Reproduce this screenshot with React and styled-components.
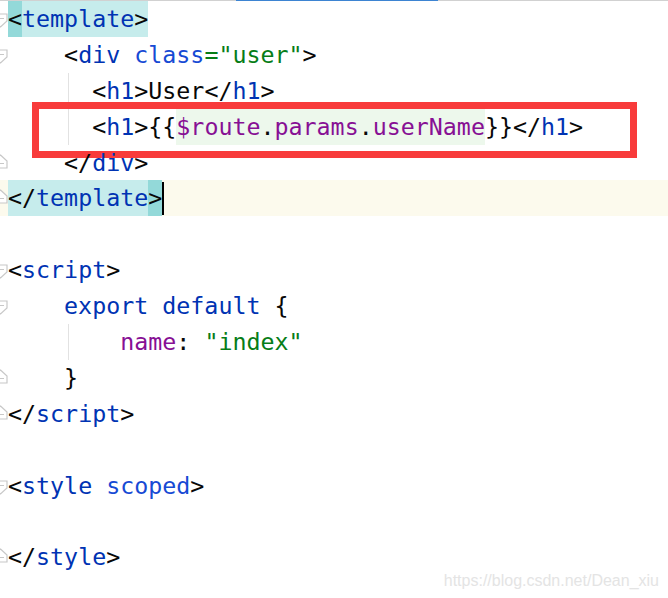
import React from 'react';
import styled, { createGlobalStyle } from 'styled-components';

const GlobalStyle = createGlobalStyle`
  html, body {
    margin: 0;
    padding: 0;
    background: #fff;
  }
`;

const Screen = styled.div`
  position: relative;
  width: 668px;
  height: 598px;
  overflow: hidden;
  background: #fff;
`;

const TabStrip = styled.div`
  display: flex;
  height: 1px;
  background: #d1d1d1;
`;

const ActiveTab = styled.div`
  margin-left: 236px;
  width: 202px;
  background: #3d84d2;
`;

const Editor = styled.div`
  display: flex;
  flex-direction: column;
  font-family: 'DejaVu Sans Mono', 'Liberation Mono', monospace;
  font-size: 23.3px;
`;

const Line = styled.div`
  position: relative;
  display: flex;
  height: 35.9px;
  line-height: 35.9px;
  white-space: pre;
  background-color: ${({ current }) => (current ? '#fcfaed' : 'transparent')};
  background-image: ${({ guide }) =>
    guide ? 'linear-gradient(#e2e2e2, #e2e2e2)' : 'none'};
  background-repeat: no-repeat;
  background-position: 68px 0;
  background-size: 1px 100%;
`;

const Gutter = styled.div`
  width: 8px;
  flex: none;
  overflow: hidden;
  display: flex;
  align-items: center;
`;

const FoldSvg = styled.svg`
  flex: none;
  margin-left: -7px;
  margin-top: ${({ dir }) => (dir === 'up' ? '-3px' : '3px')};
`;

const Code = styled.div`
  display: flex;
  padding-left: ${({ indent }) => indent || 0}ch;
`;

const colors = {
  p: '#080808',
  tag: '#0033b3',
  attr: '#174ad4',
  str: '#067d17',
  field: '#871094',
};

const highlights = {
  dark: '#93d9d9',
  light: '#c6ecec',
  inj: '#edf8ec',
};

const Token = styled.span`
  color: ${({ kind }) => colors[kind] || colors.p};
  background: ${({ hl }) => (hl ? highlights[hl] : 'transparent')};
`;

const Caret = styled.span`
  align-self: center;
  width: 2px;
  height: 33px;
  background: #000;
`;

const Callout = styled.div`
  position: absolute;
  left: 32px;
  top: -7px;
  width: 605px;
  height: 56px;
  box-sizing: border-box;
  border: 7px solid #f83b3b;
  pointer-events: none;
`;

const Watermark = styled.div`
  position: absolute;
  right: 9px;
  bottom: 8px;
  font-family: 'Liberation Sans', Arial, sans-serif;
  font-size: 16px;
  color: #e4e4e4;
`;

const FoldIcon = ({ dir }) => (
  <FoldSvg dir={dir} width="15" height="15" viewBox="0 0 15 15">
    {dir === 'up' ? (
      <path d="M7.5 1 L14 7 V14 H1 V7 Z M4 9.5 H11" fill="#fff" stroke="#c8c8c8" strokeWidth="1.2" />
    ) : (
      <path d="M1 1 H14 V8 L7.5 14 L1 8 Z M4 5.5 H11" fill="#fff" stroke="#c8c8c8" strokeWidth="1.2" />
    )}
  </FoldSvg>
);

const lines = [
  { fold: 'down', tokens: [['<', 'p', 'dark'], ['template', 'tag', 'light'], ['>', 'p', 'light']] },
  {
    fold: 'down',
    indent: 4,
    tokens: [['<'], ['div', 'tag'], [' '], ['class', 'attr'], ['="user"', 'str'], ['>']],
  },
  { indent: 6, guide: true, tokens: [['<'], ['h1', 'tag'], ['>'], ['User'], ['</'], ['h1', 'tag'], ['>']] },
  {
    indent: 6,
    guide: true,
    callout: true,
    tokens: [
      ['<'], ['h1', 'tag'], ['>'], ['{{'],
      ['$route', 'field', 'inj'], ['.', 'p', 'inj'], ['params', 'field', 'inj'], ['.', 'p', 'inj'], ['userName', 'field', 'inj'],
      ['}}'], ['</'], ['h1', 'tag'], ['>'],
    ],
  },
  { fold: 'up', indent: 4, tokens: [['</'], ['div', 'tag'], ['>']] },
  {
    fold: 'up',
    current: true,
    caret: true,
    tokens: [['</', 'p', 'light'], ['template', 'tag', 'light'], ['>', 'p', 'dark']],
  },
  { tokens: [] },
  { fold: 'down', tokens: [['<'], ['script', 'tag'], ['>']] },
  { fold: 'down', indent: 4, tokens: [['export', 'tag'], [' '], ['default', 'tag'], [' '], ['{']] },
  { indent: 8, guide: true, tokens: [['name', 'field'], [': '], ['"index"', 'str']] },
  { fold: 'up', indent: 4, tokens: [['}']] },
  { fold: 'up', tokens: [['</'], ['script', 'tag'], ['>']] },
  { tokens: [] },
  { fold: 'down', tokens: [['<'], ['style', 'tag'], [' '], ['scoped', 'attr'], ['>']] },
  { tokens: [] },
  { fold: 'up', tokens: [['</'], ['style', 'tag'], ['>']] },
  { tokens: [] },
];

const App = () => (
  <Screen>
    <GlobalStyle />
    <TabStrip>
      <ActiveTab />
    </TabStrip>
    <Editor>
      {lines.map((line, i) => (
        <Line key={i} current={line.current} guide={line.guide}>
          <Gutter>{line.fold && <FoldIcon dir={line.fold} />}</Gutter>
          <Code indent={line.indent}>
            {line.tokens.map(([text, kind, hl], j) => (
              <Token key={j} kind={kind} hl={hl}>
                {text}
              </Token>
            ))}
            {line.caret && <Caret />}
          </Code>
          {line.callout && <Callout />}
        </Line>
      ))}
    </Editor>
    <Watermark>https://blog.csdn.net/Dean_xiu</Watermark>
  </Screen>
);

export default App;
